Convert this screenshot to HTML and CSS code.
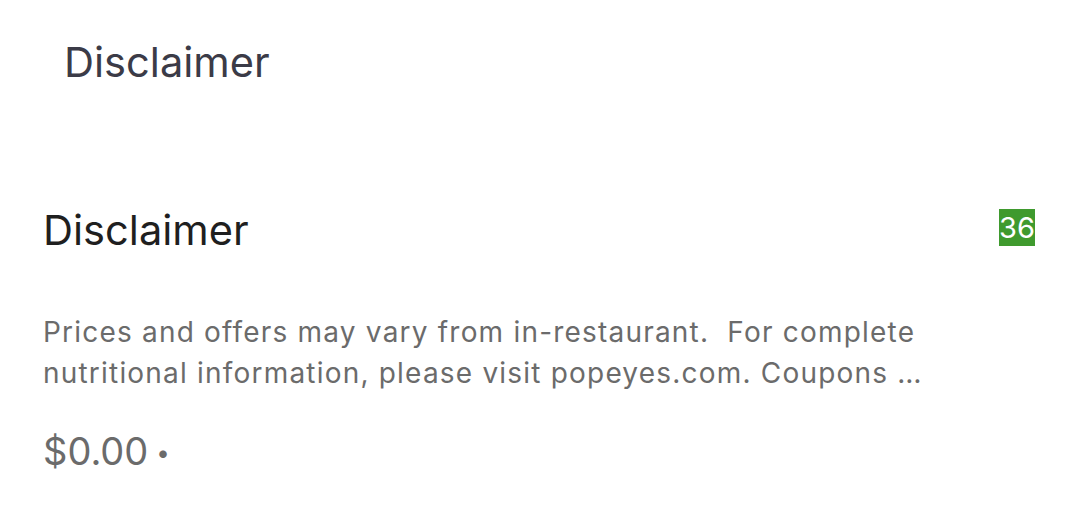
FILE: index.html
```html
<!DOCTYPE html>
<html>
<head>
<meta charset="utf-8">
<link rel="stylesheet" href="styles.css">
</head>
<body>
<div class="page">
  <header class="topbar">
    <h1 class="top-title">Disclaimer</h1>
  </header>
  <section class="item">
    <div class="item-head">
      <h2 class="item-title">Disclaimer</h2>
      <span class="badge">36</span>
    </div>
    <p class="desc">Prices and offers may vary from in-restaurant.&nbsp; For complete nutritional information, please visit popeyes.com. Coupons …</p>
    <div class="price">$0.00<span class="dot">•</span></div>
  </section>
</div>
</body>
</html>
```
FILE: styles.css
```css
html, body {
  margin: 0;
  padding: 0;
  background: #ffffff;
}
body {
  font-family: Inter, "Noto Sans", sans-serif;
  width: 1080px;
  height: 516px;
  overflow: hidden;
}
.page {
  display: flex;
  flex-direction: column;
}
.topbar {
  padding: 36px 0 0 64px;
  height: 100px;
  box-sizing: border-box;
}
.top-title {
  margin: 0;
  font-weight: 400;
  font-size: 41.6px;
  line-height: 52px;
  color: #3b3b47;
}
.item {
  padding: 104px 45px 0 43px;
}
.item-head {
  display: flex;
  justify-content: space-between;
  align-items: flex-start;
}
.item-title {
  margin: 0;
  font-weight: 400;
  font-size: 41.6px;
  line-height: 52px;
  color: #1f1f1f;
}
.badge {
  margin-top: 5px;
  background: #3f9a2e;
  color: #ffffff;
  font-size: 29px;
  line-height: 37px;
  width: 36px;
  text-align: center;
}
.desc {
  margin: 56px 0 0 0;
  font-size: 28px;
  letter-spacing: 1.2px;
  line-height: 41px;
  color: #6b6b6b;
  width: 940px;
}
.price {
  margin-top: 33px;
  font-size: 38px;
  line-height: 48px;
  color: #6b6b6b;
}
.dot {
  font-size: 24px;
  margin-left: 8px;
  vertical-align: 4px;
}
```
